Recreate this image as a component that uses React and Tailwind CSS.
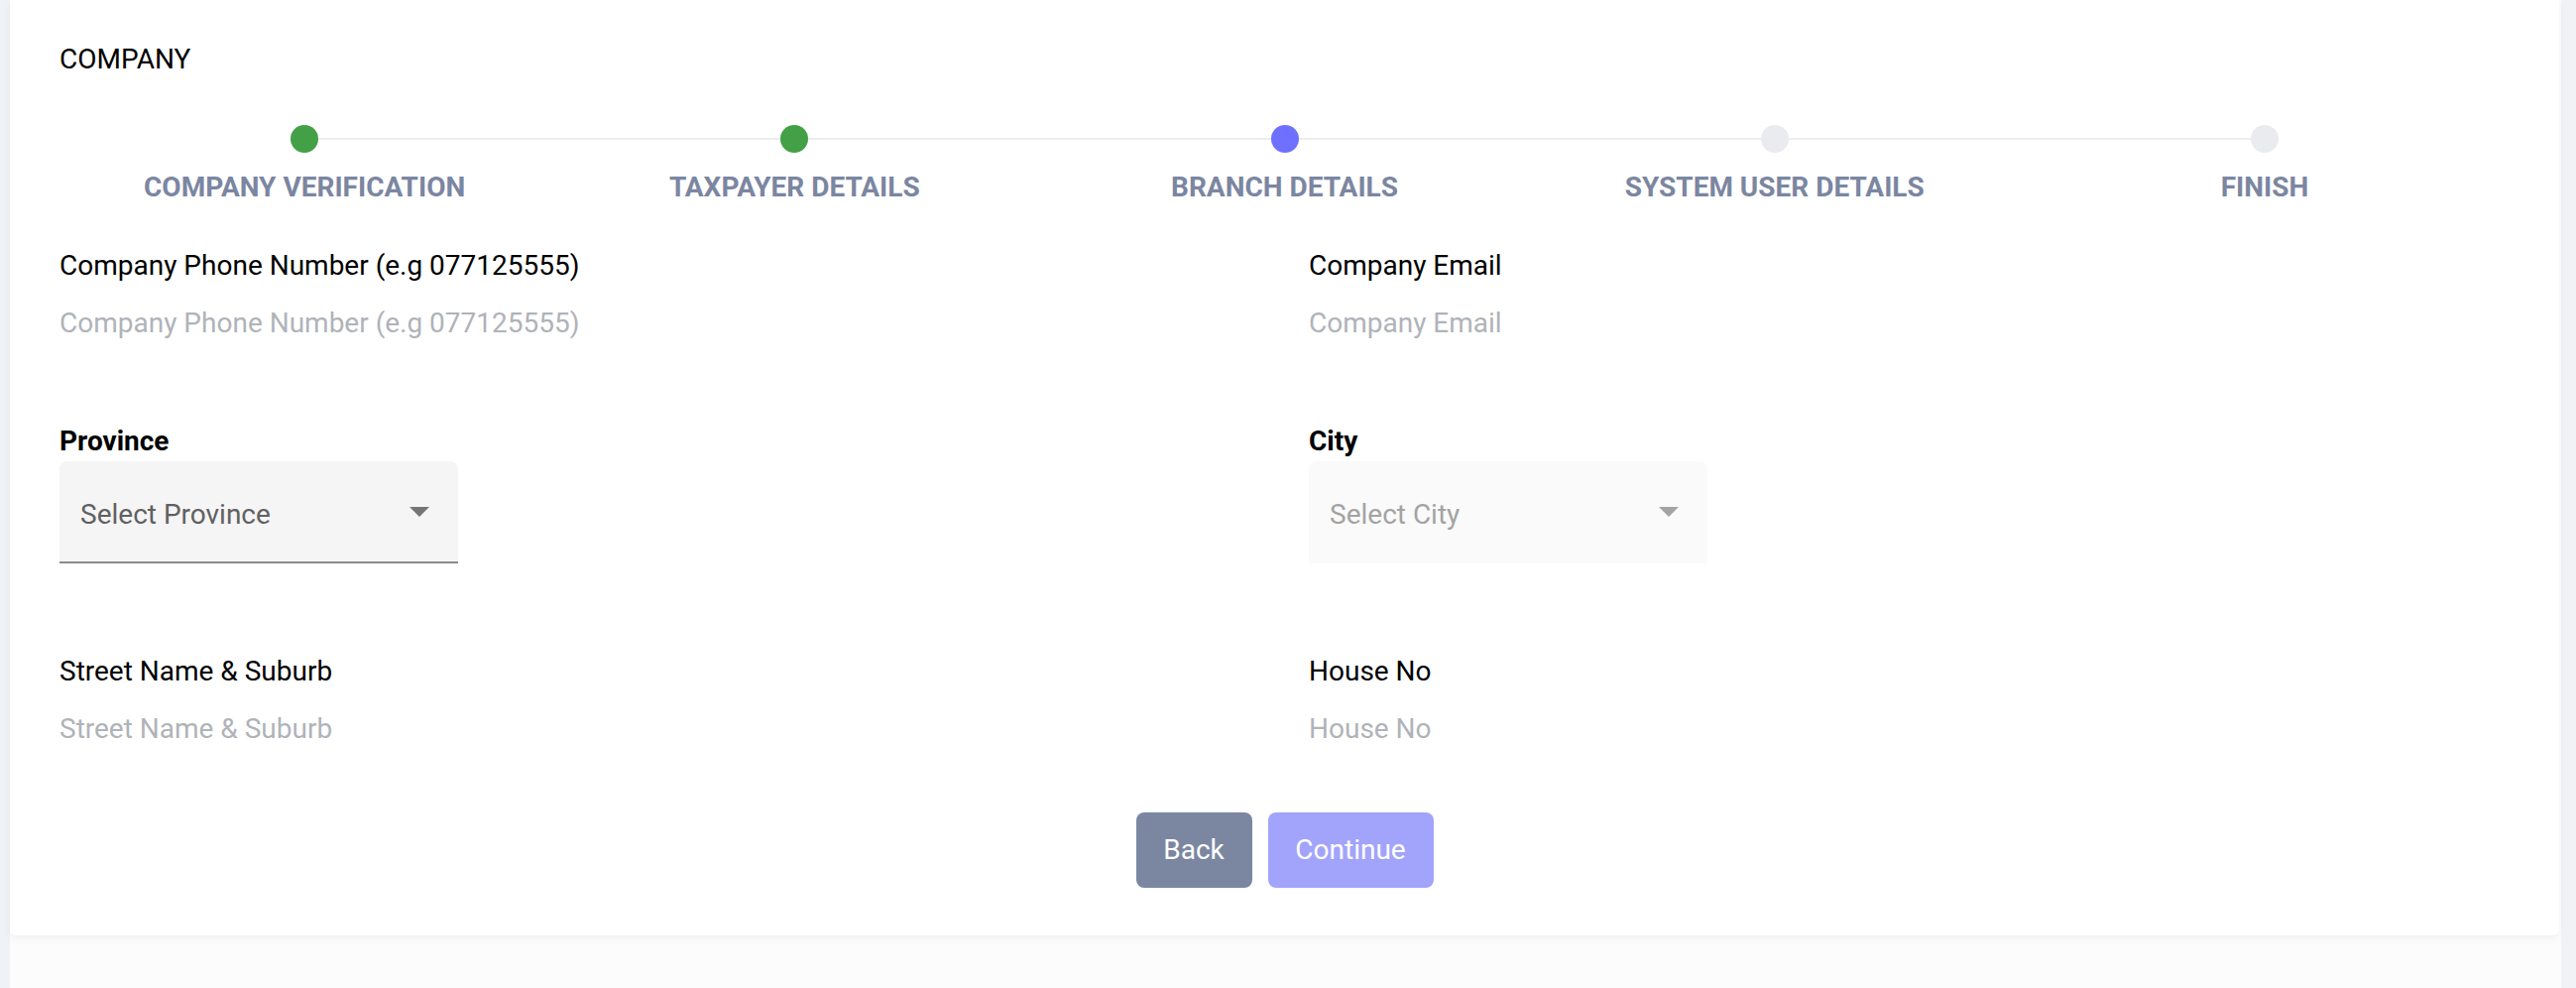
import React from 'react';

const steps = [
  { label: 'COMPANY VERIFICATION', state: 'done' },
  { label: 'TAXPAYER DETAILS', state: 'done' },
  { label: 'BRANCH DETAILS', state: 'active' },
  { label: 'SYSTEM USER DETAILS', state: 'todo' },
  { label: 'FINISH', state: 'todo' },
];

const dotColor = {
  done: 'bg-[#43a047]',
  active: 'bg-[#7070ff]',
  todo: 'bg-[#eaebef]',
};

const Caret = ({ className = '' }) => (
  <svg width="20" height="10" viewBox="0 0 20 10" className={className}>
    <path d="M0 0 L20 0 L10 10 Z" fill="currentColor" />
  </svg>
);

const Stepper = () => (
  <div className="flex mt-[50px]">
    {steps.map((step, i) => (
      <div key={step.label} className="flex-1 flex flex-col items-center">
        <div className="w-full flex items-center h-[28px]">
          <div className={`flex-1 h-[2px] ${i === 0 ? 'bg-transparent' : 'bg-[#ececf0]'}`} />
          <div className={`w-[28px] h-[28px] rounded-full shrink-0 ${dotColor[step.state]}`} />
          <div className={`flex-1 h-[2px] ${i === steps.length - 1 ? 'bg-transparent' : 'bg-[#ececf0]'}`} />
        </div>
        <div className="mt-[19px] text-[28px] leading-[32px] font-bold text-[#7b86a1] whitespace-nowrap">
          {step.label}
        </div>
      </div>
    ))}
  </div>
);

const TextField = ({ label }) => (
  <div className="flex flex-col">
    <label className="text-[28px] leading-[32px] text-black">{label}</label>
    <input
      placeholder={label}
      className="mt-[26px] h-[32px] text-[28px] leading-[32px] bg-transparent outline-none placeholder:text-[#b0b3b9] text-black"
    />
  </div>
);

const SelectField = ({ label, placeholder, disabled }) => (
  <div className="flex flex-col">
    <label className="text-[28px] leading-[32px] font-bold text-black">{label}</label>
    <div
      className={`mt-[4px] w-[402px] h-[103px] rounded-t-[8px] flex items-center justify-between pl-[21px] pr-[29px] ${
        disabled
          ? 'bg-[#fafafa] text-[#a3a3a3] border-b-2 border-transparent'
          : 'bg-[#f5f5f5] text-[#616161] border-b-2 border-[#8c8c8c]'
      }`}
    >
      <span className="mt-[6px] text-[28px] leading-[32px]">{placeholder}</span>
      <Caret className={disabled ? 'text-[#a3a3a3]' : 'text-[#757575]'} />
    </div>
  </div>
);

export default function App() {
  return (
    <div className="flex h-[996px] bg-[#f1f2f5] overflow-hidden" style={{ fontFamily: 'Roboto, "Liberation Sans", sans-serif' }}>
      <div className="w-[10px] shrink-0" />
      <div className="w-[2573px] shrink-0 bg-[#fcfcfd]">
        <div className="w-[2571px] bg-white rounded-b-[6px] shadow-[0_3px_8px_rgba(0,0,0,0.05)] pt-[44px] pb-[48px] pl-[50px] pr-[50px]">
          <h1 className="text-[28px] leading-[32px] font-normal text-black">COMPANY</h1>

          <Stepper />

          <div className="grid grid-cols-2 gap-x-[49px] mt-[47px]">
            <TextField label="Company Phone Number (e.g 077125555)" />
            <TextField label="Company Email" />

            <div className="mt-[87px]">
              <SelectField label="Province" placeholder="Select Province" />
            </div>
            <div className="mt-[87px]">
              <SelectField label="City" placeholder="Select City" disabled />
            </div>

            <div className="mt-[93px]">
              <TextField label="Street Name & Suburb" />
            </div>
            <div className="mt-[93px]">
              <TextField label="House No" />
            </div>
          </div>

          <div className="flex justify-center gap-[16px] mt-[68px]">
            <button className="w-[117px] h-[76px] rounded-[8px] bg-[#7b87a1] text-white text-[28px]">
              Back
            </button>
            <button className="w-[167px] h-[76px] rounded-[8px] bg-[#a2a4fb] text-white text-[28px]">
              Continue
            </button>
          </div>
        </div>
      </div>
    </div>
  );
}
